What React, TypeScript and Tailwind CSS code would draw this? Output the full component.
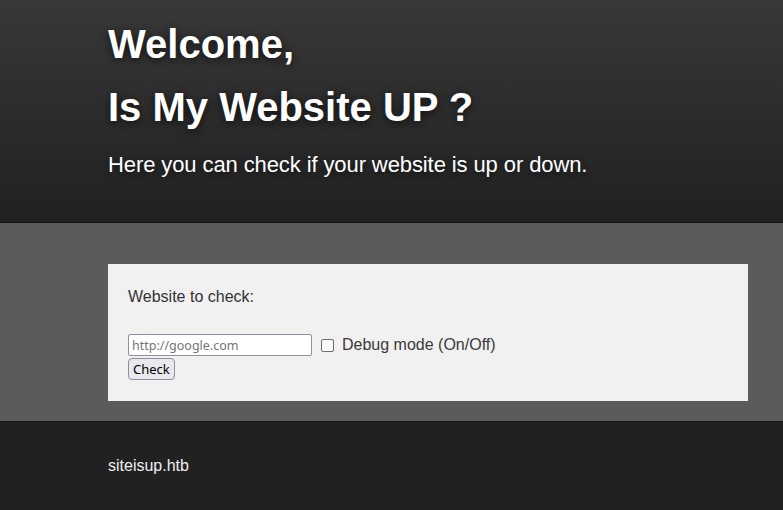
import { useState } from "react";

const App = () => {
  const [url, setUrl] = useState("");
  const [debug, setDebug] = useState(false);

  return (
    <div className="min-h-screen bg-[#212121] font-['Liberation_Sans',Arial,sans-serif]">
      {/* header */}
      <header className="h-[223px] border-b border-[#111111] bg-gradient-to-b from-[#383838] to-[#212121] pl-[108px] pt-[13px] text-white">
        <h1 className="text-[40px] font-bold leading-[63px] [text-shadow:0_2px_8px_rgba(0,0,0,0.7)]">
          Welcome,
        </h1>
        <h1 className="text-[40px] font-bold leading-[63px] [text-shadow:0_2px_8px_rgba(0,0,0,0.7)]">
          Is My Website UP ?
        </h1>
        <p className="mt-[13px] text-[22px] leading-[26px] tracking-[-0.1px] [text-shadow:0_2px_6px_rgba(0,0,0,0.5)]">
          Here you can check if your website is up or down.
        </p>
      </header>

      {/* form */}
      <section className="bg-[#5c5b5c] pb-[20px] pl-[108px] pr-[35px] pt-[41px]">
        <form
          className="h-[137px] bg-[#f1f1f1] px-[20px] pt-[24px]"
          onSubmit={(e) => e.preventDefault()}
        >
          <p className="text-[16px] leading-[18px] text-[#333333]">Website to check:</p>
          <div className="mt-[28px] flex h-[22px] items-center">
            <input
              type="text"
              value={url}
              onChange={(e) => setUrl(e.target.value)}
              placeholder="http://google.com"
              className="h-[22px] w-[184px] rounded-[2px] border border-[#8f8f9d] bg-white px-[3px] font-['Noto_Sans',sans-serif] text-[12.5px] text-[#222] placeholder:text-[#757575] outline-none"
            />
            <label className="ml-[9px] flex items-center text-[16px] leading-[18px] text-[#3a3a3a]">
              <input
                type="checkbox"
                checked={debug}
                onChange={(e) => setDebug(e.target.checked)}
                className="mr-[8px] h-[13px] w-[13px] appearance-none rounded-[2px] border border-[#6d6d6d] bg-[#fafafa]"
              />
              Debug mode (On/Off)
            </label>
          </div>
          <button
            type="submit"
            className="mt-[2px] h-[22px] rounded-[4px] border border-[#8f8f9d] bg-[#e9e9ed] px-[4px] font-['Noto_Sans',sans-serif] text-[13px] leading-none text-black"
          >
            Check
          </button>
        </form>
      </section>

      {/* footer */}
      <footer className="border-t border-[#141414] bg-[#212121] pb-[35px] pl-[108px] pt-[35px]">
        <p className="text-[16px] leading-[18px] text-[#eeeeee]">siteisup.htb</p>
      </footer>
    </div>
  );
};

export default App;
